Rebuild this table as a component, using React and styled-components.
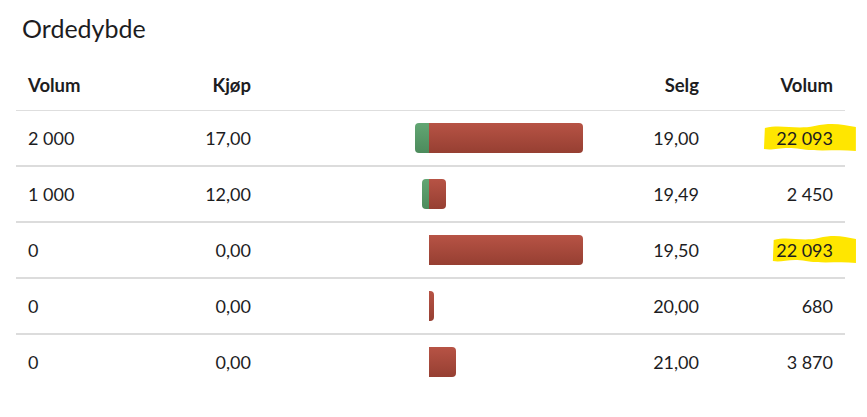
import React from "react";
import styled, { createGlobalStyle } from "styled-components";

const GlobalStyle = createGlobalStyle`
  body {
    margin: 0;
    background: #fff;
    font-family: Lato, "Open Sans", sans-serif;
    color: #1d1d1f;
  }
`;

const rows = [
  { buyVol: 2000, buy: "17,00", sell: "19,00", sellVol: 22093, mark: 13 },
  { buyVol: 1000, buy: "12,00", sell: "19,49", sellVol: 2450, thick: true },
  { buyVol: 0, buy: "0,00", sell: "19,50", sellVol: 22093, mark: 4 },
  { buyVol: 0, buy: "0,00", sell: "20,00", sellVol: 680, thick: true },
  { buyVol: 0, buy: "0,00", sell: "21,00", sellVol: 3870 },
];

const SCALE = 154 / 22093;

const fmt = (n) => String(n).replace(/\B(?=(\d{3})+(?!\d))/g, " ");

const OrderDepth = () => {
  return (
    <Wrapper>
      <Title>Ordedybde</Title>
      <HeadRow>
        <Cell>Volum</Cell>
        <Cell right>Kjøp</Cell>
        <Cell />
        <Cell right>Selg</Cell>
        <Cell right>Volum</Cell>
      </HeadRow>
      {rows.map((r, i) => (
        <Row key={i} thick={r.thick}>
          <Cell>{fmt(r.buyVol)}</Cell>
          <Cell right>{r.buy}</Cell>
          <BarCell>
            <BuySide>
              {r.buyVol > 0 && (
                <BuyBar style={{ width: Math.round(r.buyVol * SCALE) }} />
              )}
            </BuySide>
            <SellSide>
              <SellBar
                style={{ width: Math.max(4, Math.round(r.sellVol * SCALE)) }}
              />
            </SellSide>
          </BarCell>
          <Cell right>{r.sell}</Cell>
          <Cell right>
            {r.mark ? (
              <Marked>
                <Marker
                  lead={r.mark}
                  viewBox="0 0 100 28"
                  preserveAspectRatio="none"
                >
                  <path
                    d="M2 4 C 20 0, 35 6, 55 2 S 85 1, 99 3 L 99 27 C 80 25, 60 28, 40 25 S 12 27, 1 25 Z"
                    fill="#ffe600"
                  />
                </Marker>
                <span>{fmt(r.sellVol)}</span>
              </Marked>
            ) : (
              fmt(r.sellVol)
            )}
          </Cell>
        </Row>
      ))}
    </Wrapper>
  );
};

const Wrapper = styled.div`
  width: 829px;
  padding: 13px 0 0 16px;
`;

const Title = styled.h1`
  margin: 0 0 0 6px;
  font-size: 25px;
  font-weight: 400;
  line-height: 30px;
  color: #1d1d1f;
`;

const Grid = styled.div`
  display: grid;
  grid-template-columns: 124px 123px 332px 116px 134px;
  align-items: center;
`;

const HeadRow = styled(Grid)`
  margin-top: 16px;
  height: 51px;
  font-weight: 700;
  font-size: 18.5px;
  border-bottom: 1px solid #dedede;
`;

const Row = styled(Grid)`
  height: 54px;
  font-size: 18px;
  border-top: ${(p) => (p.thick ? "2px" : "0")} solid #dcdcdc;
  & + & {
    border-top: ${(p) => (p.thick ? "2px" : "1px")} solid #dcdcdc;
  }
`;

const Cell = styled.div`
  padding: 0 12px;
  text-align: ${(p) => (p.right ? "right" : "left")};
  white-space: nowrap;
`;

const BarCell = styled.div`
  display: grid;
  grid-template-columns: 1fr 1fr;
  height: 30px;
`;

const BuySide = styled.div`
  display: flex;
  justify-content: flex-end;
`;

const SellSide = styled.div`
  display: flex;
  justify-content: flex-start;
`;

const BuyBar = styled.div`
  height: 30px;
  border-radius: 4px 0 0 4px;
  background: linear-gradient(#62a673, #4c8b5c);
`;

const SellBar = styled.div`
  height: 30px;
  border-radius: 0 4px 4px 0;
  background: linear-gradient(#b75345, #963f32);
`;

const Marked = styled.span`
  position: relative;
  display: inline-block;
  line-height: 22px;
  & > span {
    position: relative;
  }
`;

const Marker = styled.svg`
  position: absolute;
  left: ${(p) => -p.lead}px;
  top: -3px;
  width: calc(100% + ${(p) => p.lead + 24}px);
  height: 28px;
`;

export default function App() {
  return (
    <>
      <GlobalStyle />
      <OrderDepth />
    </>
  );
}
